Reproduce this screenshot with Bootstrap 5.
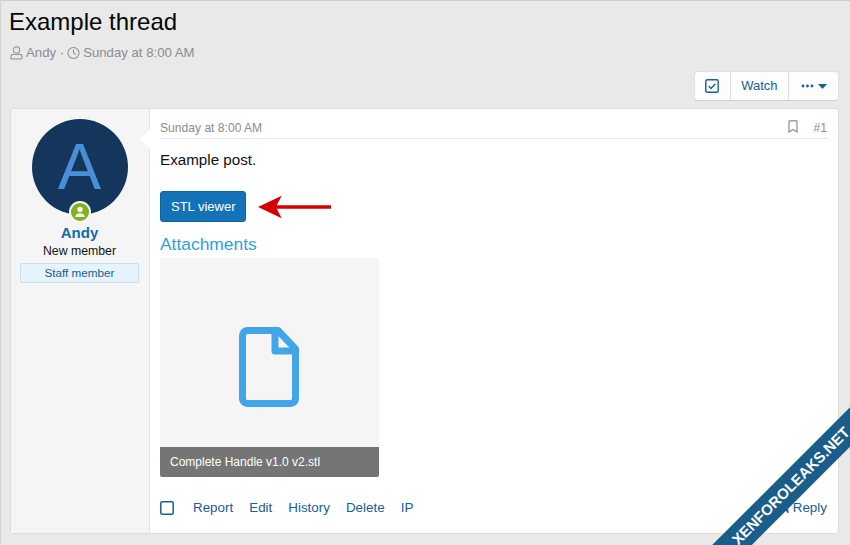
<!DOCTYPE html>
<html lang="en">
<head>
<meta charset="utf-8">
<title>Example thread</title>
<link href="https://cdn.jsdelivr.net/npm/bootstrap@5.3.0/dist/css/bootstrap.min.css" rel="stylesheet">
<style>
html,body{height:545px;overflow:hidden}
body{background:#e9e9e9;border-top:1px solid #cfcfcf;border-left:1px solid #d4d4d4;font-family:"Liberation Sans",Arial,sans-serif;color:#141414;position:relative;padding:0 11px 0 9px}
.thread-title{font-size:24px;line-height:29px;font-weight:400;margin:6px 0 0 -1px;color:#050505}
.thread-meta{font-size:13.2px;line-height:18px;color:#8c8c8c;margin-top:8px;gap:3px}
.thread-meta svg{width:13px;height:14px}
.action-row{margin-top:9px;height:29px;margin-bottom:8px}
.watch-group{background:#fdfdfd;border:1px solid #e0e0e0;border-bottom-color:#cfcfcf;border-radius:4px;height:30px;font-size:13px;color:#176093}
.watch-group>div{padding:0 10.5px;height:100%;border-left:1px solid #dcdcdc}
.watch-group>div:first-child{border-left:0;width:35px;justify-content:center;padding:0}
.watch-group>div:last-child{padding:0 11.5px}
.post-shell{background:#fff;border:1px solid #dcdcdc;border-radius:3px;height:426px}
.user-cell{width:139px;background:#f5f5f5;border-right:1px solid #e4e4e4;position:relative;flex:none;padding:10px 10px 0 9px}
.user-cell::after{content:"";position:absolute;top:20px;right:-1px;width:0;height:0;border-top:10px solid transparent;border-bottom:10px solid transparent;border-right:10px solid #fff}
.avatar-disc{width:96px;height:96px;border-radius:50%;background:#14355c;color:#4a8fd6;font-size:65px;line-height:96px;text-align:center;position:relative;margin:0 auto}
.online-dot{position:absolute;left:39px;bottom:-6px;width:18px;height:18px;border-radius:50%;background:#7fb01e;border:2px solid #f5f5f5;box-sizing:content-box;margin:-2px}
.user-name{font-size:15px;line-height:18px;font-weight:700;color:#1169ad;text-align:center;margin-top:9px}
.user-title{font-size:12.3px;line-height:16px;text-align:center;color:#141414;margin-top:1px}
.staff-tag{font-size:11.7px;line-height:18px;text-align:center;color:#176093;background:#e6f3fb;border:1px solid #c4e2f5;border-radius:2px;margin-top:4px;height:20px}
.post-cell{padding:11px 10px 0;min-width:0}
.post-head{font-size:12.1px;line-height:16px;color:#8c8c8c;border-bottom:1px solid #e4e4e4;height:19px}
.edge-inset{padding-right:1px}
.post-body{font-size:15.2px;line-height:20px;margin-top:11px;color:#111}
.btn-row{margin-top:21px;gap:12px}
.stl-btn{background:#1473b7;color:#fff;border:1px solid #11639f;border-radius:3px;font-size:13px;line-height:18px;padding:6px 10px 4px;width:86px;height:31px;white-space:nowrap}
.attach-title{font-size:17.4px;line-height:20px;color:#2f9fe0;margin-top:12px}
.file-tile{width:219px;height:219px;background:#f5f5f5;margin-top:4px;position:relative}
.file-tile svg{position:absolute;left:78px;top:68px}
.file-name{position:absolute;left:0;right:0;bottom:0;height:30px;line-height:30px;background:#757575;color:#fff;font-size:12px;padding-left:10px;border-radius:0 0 2px 2px}
.post-actions{font-size:13.4px;color:#176093;margin-top:21px;height:20px;gap:16px}
.post-actions .action-first{margin-left:3px}
.ribbon-clip{position:absolute;left:699px;top:399px;width:150px;height:145px;overflow:hidden}
.leak-ribbon{position:absolute;left:-59px;top:72px;width:300px;height:28px;line-height:28px;background:#1a5c8a;color:#fff;font-weight:700;font-size:15px;text-align:center;transform:rotate(-45deg);white-space:nowrap}
</style>
</head>
<body>
<h1 class="thread-title">Example thread</h1>
<div class="thread-meta d-flex align-items-center">
<svg viewBox="0 0 14 15" fill="none" stroke="#8c8c8c" stroke-width="1.100"><circle cx="7" cy="4.200" r="3.400"/><path d="M1 13v-1.200c0-1.800 1.400-3 3-3h.6c1.500.6 3.300.6 4.800 0h.6c1.600 0 3 1.200 3 3V13c0 .6-.4 1-1 1H2c-.6 0-1-.4-1-1z"/></svg>
<span>Andy ·</span>
<svg viewBox="0 0 14 14" fill="none" stroke="#8c8c8c" stroke-width="1.100"><circle cx="7" cy="7" r="6"/><path d="M7 3.200V7l2.600 1.800"/></svg>
<span>Sunday at 8:00 AM</span>
</div>
<div class="action-row d-flex justify-content-end">
<div class="watch-group d-flex align-items-center">
<div class="d-flex align-items-center"><svg width="14" height="14" viewBox="0 0 14 14" fill="none" stroke="#176093"><rect x=".8" y=".8" width="12.400" height="12.400" rx="1.500" stroke-width="1.400"/><path d="M3.800 7.200l2.200 2.300 4.300-4.600" stroke-width="1.500"/></svg></div>
<div class="d-flex align-items-center">Watch</div>
<div class="d-flex align-items-center gap-1"><svg width="13" height="4" viewBox="0 0 13 4" fill="#176093"><circle cx="2" cy="2" r="1.400"/><circle cx="6.500" cy="2" r="1.400"/><circle cx="11" cy="2" r="1.400"/></svg><svg width="9" height="5" viewBox="0 0 9 5" fill="#176093"><path d="M0 0h9L4.500 5z"/></svg></div>
</div>
</div>
<div class="post-shell d-flex">
<div class="user-cell">
<div class="avatar-disc">A<span class="online-dot d-flex align-items-center justify-content-center"><svg width="12" height="12" viewBox="0 0 12 12" fill="#f5f5f5"><circle cx="6" cy="3.500" r="2.700"/><path d="M1.200 11c0-2.500 1.800-3.800 4.800-3.800s4.800 1.300 4.800 3.800z"/></svg></span></div>
<div class="user-name">Andy</div>
<div class="user-title">New member</div>
<div class="staff-tag">Staff member</div>
</div>
<div class="post-cell flex-grow-1">
<div class="post-head d-flex justify-content-between">
<span>Sunday at 8:00 AM</span>
<span class="d-flex align-items-start gap-3 edge-inset"><svg width="10" height="13" viewBox="0 0 10 13" fill="none" stroke="#8c8c8c" stroke-width="1.200"><path d="M1 1.500c0-.4.300-.7.700-.7h6.600c.4 0 .7.300.7.700V12L5 9.500 1 12z"/></svg><span>#1</span></span>
</div>
<div class="post-body">Example post.</div>
<div class="btn-row d-flex align-items-center">
<div class="stl-btn">STL viewer</div>
<svg width="74" height="24" viewBox="0 0 75 24" fill="#d40000"><path d="M0 12 24 .5 19 10.200H74v3.600H19L24 23.500z"/></svg>
</div>
<div class="attach-title">Attachments</div>
<div class="file-tile">
<svg width="62" height="82" viewBox="0 0 62 82" fill="none" stroke="#42a5ea" stroke-width="7" stroke-linejoin="round"><path d="M10 4.500h30L57.500 23v49.500a5 5 0 0 1-5 5h-43a5 5 0 0 1-5-5v-63a5 5 0 0 1 5-5z"/><path d="M37 4.500V25h20.500"/></svg>
<div class="file-name">Complete Handle v1.0 v2.stl</div>
</div>
<div class="post-actions d-flex align-items-center">
<svg width="14" height="14" viewBox="0 0 14 14" fill="none" stroke="#176093" stroke-width="1.500"><rect x=".8" y=".8" width="12.400" height="12.400" rx="1.500"/></svg>
<span class="action-first">Report</span><span>Edit</span><span>History</span><span>Delete</span><span>IP</span>
<span class="ms-auto d-flex align-items-center gap-1 edge-inset"><svg width="12" height="11" viewBox="0 0 12 11" fill="none" stroke="#176093" stroke-width="1.200"><path d="M5 1 1 4.500 5 8V5.800c3 0 5 1 6 4 .3-4-2-6.500-6-6.500z"/></svg>Reply</span>
</div>
</div>
</div>
<div class="ribbon-clip"><div class="leak-ribbon">XENFOROLEAKS.NET</div></div>
<script src="https://cdn.jsdelivr.net/npm/bootstrap@5.3.0/dist/js/bootstrap.bundle.min.js"></script>
</body>
</html>
